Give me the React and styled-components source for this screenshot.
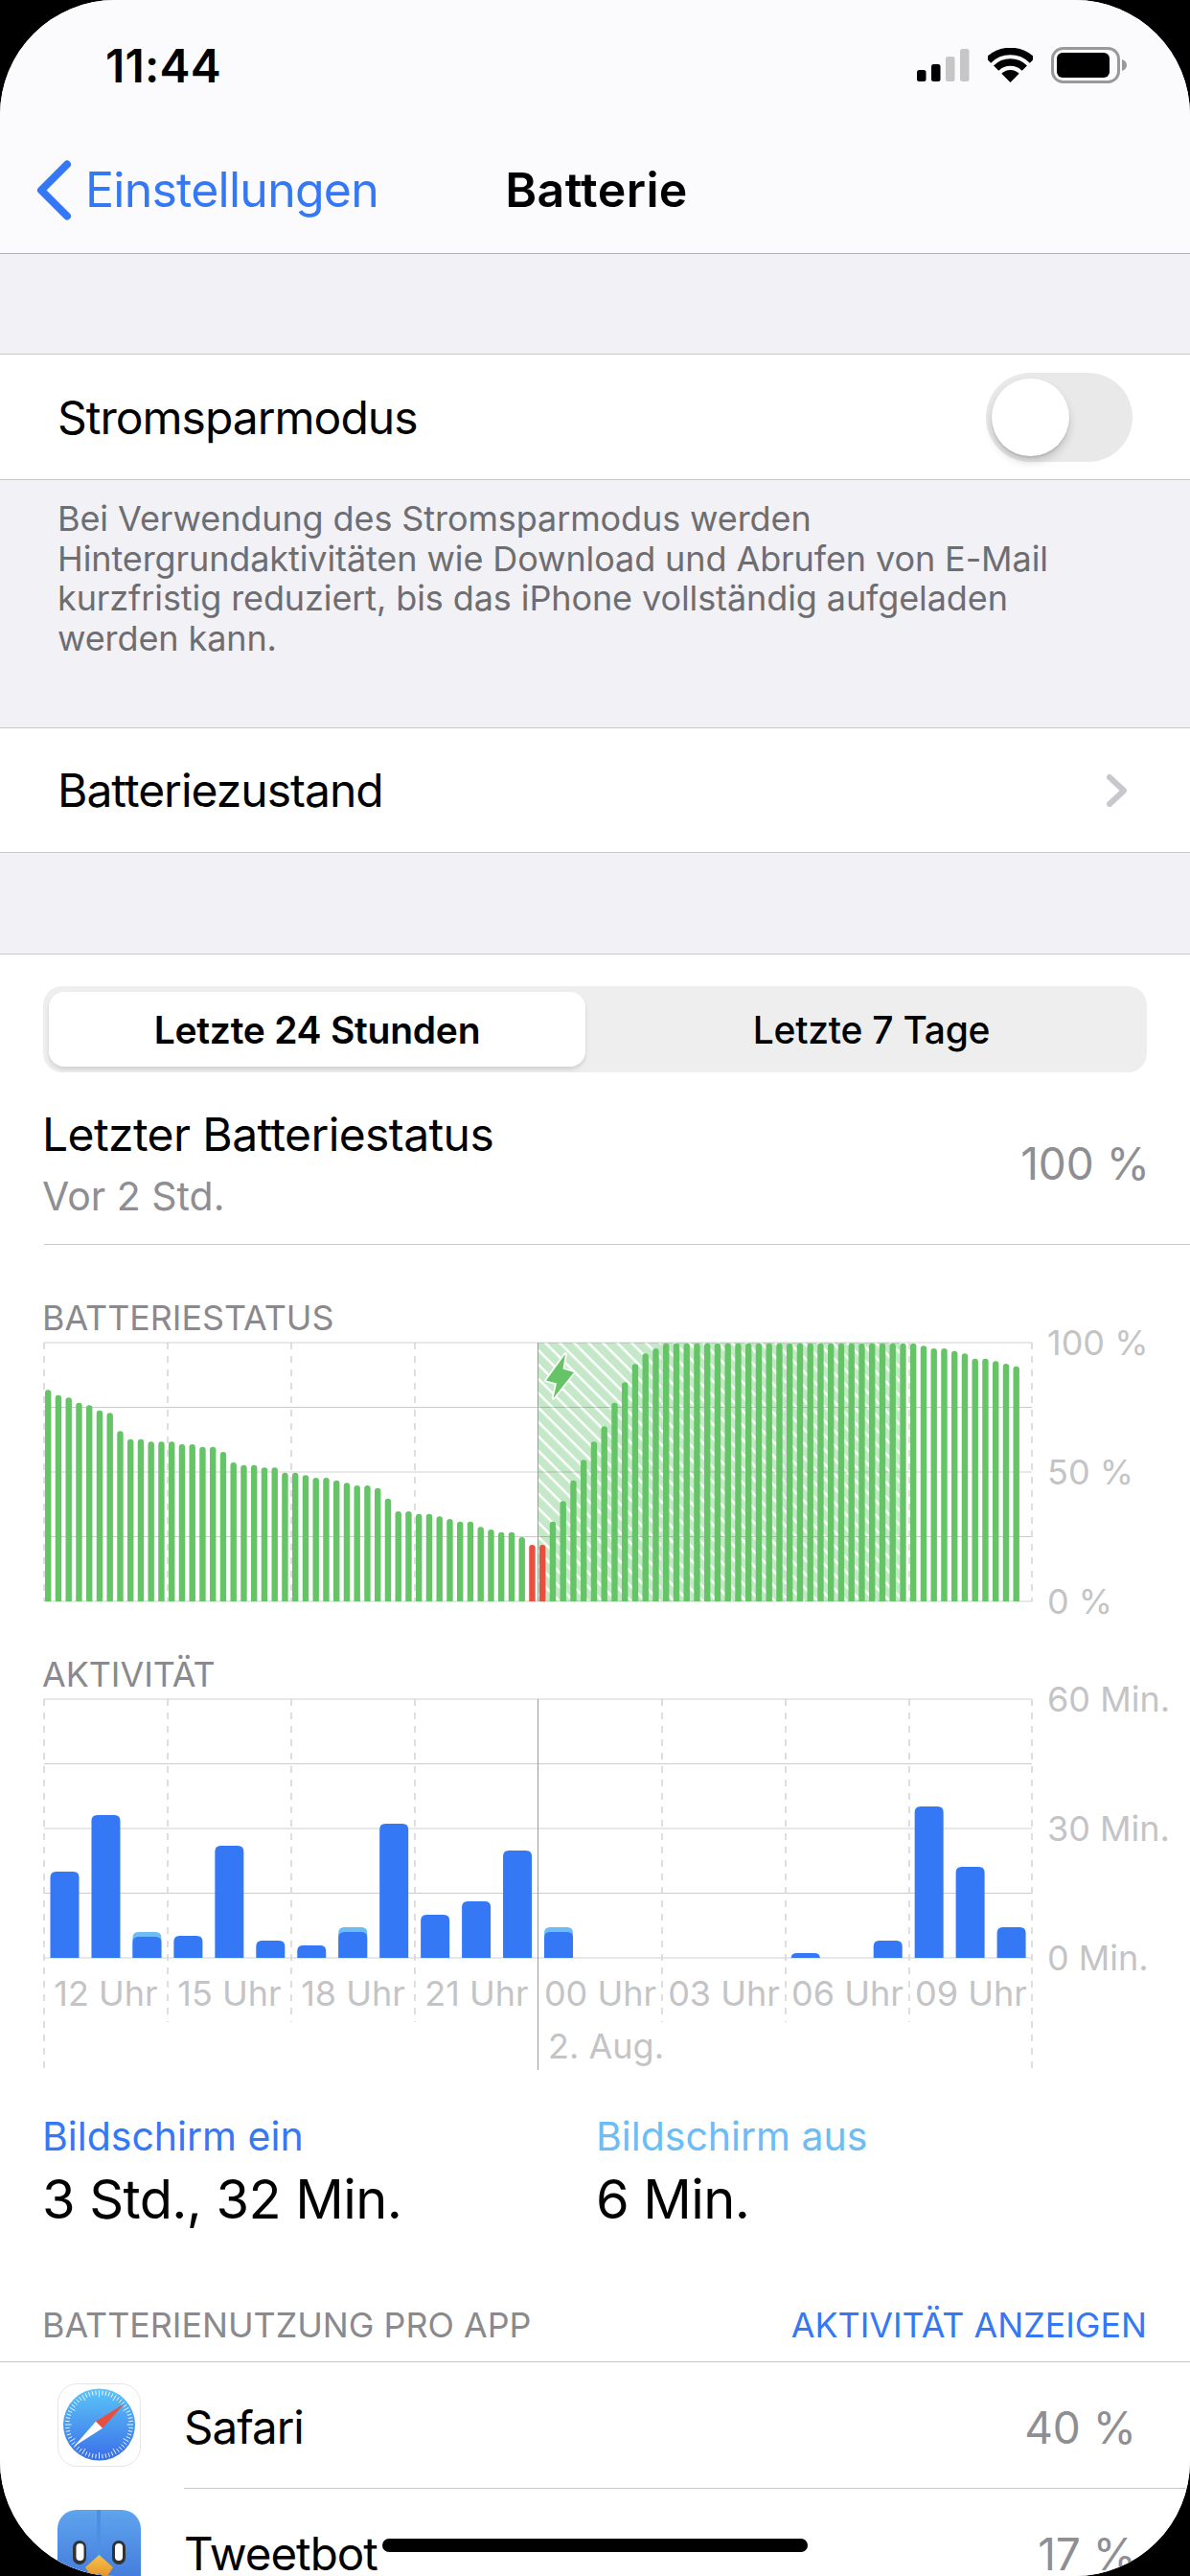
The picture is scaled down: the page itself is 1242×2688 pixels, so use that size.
import React from 'react'
import styled, { createGlobalStyle } from 'styled-components'

const GlobalStyle = createGlobalStyle`
  html, body {
    margin: 0;
    padding: 0;
    background: #000;
  }
  * {
    box-sizing: border-box;
  }
`

const Screen = styled.div`
  position: relative;
  width: 1242px;
  height: 2688px;
  overflow: hidden;
  border-radius: 120px;
  background: #f1f1f6;
  font-family: Inter, "Liberation Sans", sans-serif;
  color: #000;
`

const Header = styled.header`
  height: 265px;
  background: #fbfbfd;
  border-bottom: 1px solid #b2b2b2;
`

const StatusBar = styled.div`
  display: flex;
  align-items: center;
  justify-content: space-between;
  height: 136px;
  padding: 0 65px 0 110px;
`

const Clock = styled.span`
  font-size: 48px;
  font-weight: 600;
  letter-spacing: 0.2px;
`

const StatusIcons = styled.div`
  display: flex;
  align-items: center;
  gap: 19px;
`

const NavBar = styled.nav`
  display: grid;
  grid-template-columns: 1fr auto 1fr;
  align-items: center;
  height: 124px;
`

const BackLink = styled.a`
  display: flex;
  align-items: center;
  gap: 14px;
  padding-left: 38px;
  font-size: 50px;
  letter-spacing: -0.75px;
  color: #3478f6;
`

const NavTitle = styled.span`
  margin-left: 3px;
  font-size: 50px;
  font-weight: 600;
  letter-spacing: 0.4px;
`

const Gap = styled.div`
  height: ${p => p.$h}px;
`

const Row = styled.div`
  display: flex;
  align-items: center;
  justify-content: space-between;
  height: ${p => p.$h}px;
  padding: 0 60px 0 60px;
  background: #fff;
  border-top: 1px solid #c8c8cc;
  border-bottom: 1px solid #c8c8cc;
  font-size: 48px;
  letter-spacing: -1px;
`

const Toggle = styled.div`
  display: flex;
  align-items: center;
  width: 153px;
  height: 93px;
  padding-left: 6px;
  border-radius: 47px;
  background: #e9e9ea;
`

const Knob = styled.div`
  width: 81px;
  height: 81px;
  border-radius: 50%;
  background: #fff;
  box-shadow: 0 6px 10px rgba(0, 0, 0, 0.16), 0 2px 2px rgba(0, 0, 0, 0.1);
`

const Footnote = styled.p`
  height: 258px;
  margin: 0;
  padding: 20px 60px 0 60px;
  font-size: 36px;
  line-height: 41.7px;
  letter-spacing: -0.1px;
  color: #6d6d72;
`

const Content = styled.section`
  height: 1693px;
  background: #fff;
  border-top: 1px solid #c8c8cc;
`

const Segments = styled.div`
  display: flex;
  align-items: center;
  width: 1152px;
  height: 90px;
  margin: 33px 0 0 45px;
  padding: 0 6px;
  border-radius: 20px;
  background: #eeeeef;
`

const Segment = styled.div`
  display: flex;
  align-items: center;
  justify-content: center;
  flex: ${p => (p.$active ? '0 0 560px' : '1')};
  height: 78px;
  padding-left: ${p => (p.$active ? 0 : 17)}px;
  border-radius: 16px;
  font-size: 39px;
  font-weight: ${p => (p.$active ? 600 : 500)};
  letter-spacing: -0.25px;
  background: ${p => (p.$active ? '#fff' : 'transparent')};
  box-shadow: ${p => (p.$active ? '0 3px 4px rgba(0, 0, 0, 0.12)' : 'none')};
`

const LastCharge = styled.div`
  display: flex;
  justify-content: space-between;
  align-items: flex-start;
  height: 180px;
  margin-left: 46px;
  padding: 40px 42px 0 0;
  border-bottom: 1px solid #c8c8cc;
`

const LastTitle = styled.div`
  margin-left: -2px;
  font-size: 48px;
  line-height: 50px;
  letter-spacing: -0.6px;
`

const LastSub = styled.div`
  margin: 14px 0 0 -2px;
  font-size: 41px;
  line-height: 50px;
  color: #8e8e93;
`

const LastValue = styled.div`
  margin-top: 30px;
  font-size: 46px;
  line-height: 50px;
  color: #8e8e93;
`

const ChartLabel = styled.div`
  height: 40px;
  margin: 56px 0 6px 44px;
  font-size: 35.8px;
  line-height: 40px;
  color: #8a8a8e;
`

const PlotRow = styled.div`
  display: flex;
  height: 270px;
  margin-left: 46px;
`

const Plot = styled.svg`
  display: block;
  flex: none;
  overflow: visible;
`

const YAxis = styled.div`
  display: flex;
  flex-direction: column;
  justify-content: space-between;
  height: 270px;
  margin-left: 16px;
`

const YTick = styled.span`
  display: flex;
  align-items: center;
  height: 0;
  font-size: 36px;
  white-space: nowrap;
  color: #c4c4c6;
`

const HourGrid = styled.div`
  display: grid;
  grid-template-columns: repeat(8, 129px);
  row-gap: 15px;
  margin: 17px 0 0 46px;
  font-size: 36px;
  line-height: 40px;
  color: #c4c4c6;
`

const Hour = styled.span`
  text-align: center;
  white-space: nowrap;
`

const DateTick = styled.span`
  grid-column: 5 / span 2;
  padding-left: 10px;
`

const Legend = styled.div`
  display: grid;
  grid-template-columns: 578px 1fr;
  margin: 52px 0 0 44px;
`

const LegendName = styled.div`
  font-size: 41px;
  line-height: 44px;
  color: ${p => p.$color};
`

const LegendValue = styled.div`
  margin-top: 14px;
  font-size: 56px;
  line-height: 60px;
  letter-spacing: -0.6px;
`

const UsageHeader = styled.div`
  display: flex;
  justify-content: space-between;
  height: 59px;
  margin-top: 81px;
  padding: 0 45px 0 44px;
  border-bottom: 1px solid #c8c8cc;
  font-size: 35.8px;
  line-height: 40px;
  color: #8a8a8e;
`

const UsageLink = styled.span`
  color: #3478f6;
`

const AppRow = styled.div`
  display: flex;
  align-items: flex-start;
  padding-left: 60px;
`

const AppIcon = styled.svg`
  display: block;
  flex: none;
  margin-top: 22px;
`

const AppBody = styled.div`
  display: flex;
  align-items: center;
  justify-content: space-between;
  flex: 1;
  height: 132px;
  margin-left: 45px;
  padding: 4px 56px 0 0;
  border-bottom: 1px solid #c8c8cc;
  font-size: 47.5px;
  letter-spacing: -1px;
`

const AppShare = styled.span`
  font-size: 46px;
  letter-spacing: 0;
  color: #8e8e93;
`

const HomeBar = styled.div`
  position: absolute;
  left: 399px;
  bottom: 25px;
  width: 444px;
  height: 14px;
  border-radius: 7px;
  background: #000;
`

const ChevronSvg = styled.svg`
  display: block;
  margin-right: 6px;
`

const SignalIcon = () => (
  <svg width="55" height="34" viewBox="0 0 55 34">
    <rect x="0" y="22" width="9.5" height="12" rx="2.5" fill="#000" />
    <rect x="15" y="16" width="9.5" height="18" rx="2.5" fill="#000" />
    <rect x="30" y="8" width="9.5" height="26" rx="2.5" fill="#c6c6c6" />
    <rect x="45" y="0" width="9.5" height="34" rx="2.5" fill="#c6c6c6" />
  </svg>
)

const WifiIcon = () => (
  <svg width="47" height="36" viewBox="0 0 47 36">
    <path d="M.5 13A32.5 32.5 0 0 1 46.5 13" fill="none" stroke="#000" strokeWidth="7.5" />
    <path d="M8.65 21.15A21 21 0 0 1 38.35 21.15" fill="none" stroke="#000" strokeWidth="7.5" />
    <path d="M23.5 36L14.3 26.8A13 13 0 0 1 32.7 26.8Z" fill="#000" />
  </svg>
)

const BatteryIcon = () => (
  <svg width="80" height="38" viewBox="0 0 80 38">
    <rect x="1.5" y="1.5" width="69" height="35" rx="11" fill="none" stroke="#999" strokeWidth="3" />
    <rect x="6" y="6" width="55" height="26" rx="6" fill="#000" />
    <path d="M74 13c3 1 5 3 5 6s-2 5-5 6z" fill="#999" />
  </svg>
)

const BackChevron = () => (
  <svg width="37" height="63" viewBox="0 0 37 63">
    <path d="M32 4.5L5 31.5L32 58.5" fill="none" stroke="#3478f6" strokeWidth="8" strokeLinecap="round" strokeLinejoin="round" />
  </svg>
)

const RowChevron = () => (
  <ChevronSvg width="21" height="34" viewBox="0 0 21 34">
    <path d="M3 3L18 17L3 31" fill="none" stroke="#c7c7cc" strokeWidth="6" strokeLinecap="round" strokeLinejoin="round" />
  </ChevronSvg>
)

// tops measured from the screenshot, 3x zoomed, baseline at 998
const batteryTops = [
  336, 352, 360, 376, 384, 400, 408, 465, 490, 490, 498, 498, 498, 506, 506, 514, 514, 530, 563, 571,
  571, 579, 579, 595, 595, 603, 611, 611, 619, 627, 635, 635, 643, 676, 716, 716, 724, 724, 732, 740,
  748, 748, 765, 773, 781, 781, 797, 821, 821, 748, 684, 619, 555, 498, 450, 376, 312, 255, 222, 206,
  190, 190, 190, 190, 190, 190, 190, 190, 190, 190, 190, 190, 190, 190, 190, 190, 190, 190, 190, 190,
  190, 190, 190, 190, 190, 198, 206, 206, 214, 222, 238, 238, 246, 254, 262,
]

// [screen on, screen off] in px, per hour
const activity = [
  [90, 0], [149, 0], [22, 5], [23, 0], [117, 0], [18, 0], [13, 0], [27, 5], [140, 0], [45, 0], [59, 0], [112, 0],
  [27, 5], [0, 0], [0, 0], [0, 0], [0, 0], [0, 0], [5, 0], [0, 0], [18, 0], [158, 0], [95, 0], [32, 0],
]

const gridX = [0, 129, 258, 387, 645, 774, 903, 1031]

const GridLines = ({ dashEnd, longEnd }) => (
  <>
    {[0, 135, 270].map(y => (
      <line key={y} x1="0" x2="1031" y1={y} y2={y} stroke="rgba(0,0,0,0.09)" strokeWidth="2" />
    ))}
    {[67.5, 202.5].map(y => (
      <line key={y} x1="0" x2="1031" y1={y} y2={y} stroke="rgba(0,0,0,0.2)" strokeWidth="1" />
    ))}
    {gridX.map(x => (
      <line
        key={x}
        x1={x}
        x2={x}
        y1="0"
        y2={x === 0 || x === 1031 ? longEnd : dashEnd}
        stroke="#d4d4d4"
        strokeWidth="1.5"
        strokeDasharray="7 7"
      />
    ))}
    <line x1="515.5" x2="515.5" y1="0" y2={longEnd} stroke="#9a9a9a" strokeWidth="1" />
  </>
)

const BatteryChart = () => (
  <Plot width="1031" height="270" viewBox="0 0 1031 270">
    <defs>
      <pattern id="charging" width="10.6" height="10.6" patternUnits="userSpaceOnUse" patternTransform="rotate(45)">
        <rect width="10.6" height="10.6" fill="#c5e9c8" />
        <rect y="0" width="10.6" height="2.4" fill="#fff" />
      </pattern>
    </defs>
    <rect x="516" y="0" width="377" height="270" fill="url(#charging)" />
    <GridLines dashEnd={270} longEnd={270} />
    {batteryTops.map((top, i) => {
      const x = 1 + i * 10.75
      const y = (top - 188) / 3
      return (
        <path
          key={i}
          d={`M${x} 270V${y + 3.2}a3.2 3.2 0 0 1 6.4 0V270Z`}
          fill={i === 47 || i === 48 ? '#ea4f3d' : '#64c466'}
        />
      )
    })}
    <path
      d="M544 12L524 39.5L535 42.5L531.5 58L553 31L541.5 27.5Z"
      fill="#64c466"
      stroke="#fff"
      strokeWidth="3.5"
      strokeLinejoin="round"
      paintOrder="stroke"
    />
  </Plot>
)

const ActivityChart = () => (
  <Plot width="1031" height="270" viewBox="0 0 1031 270">
    <GridLines dashEnd={337} longEnd={387} />
    {activity.map(([on, off], i) => {
      const x = 6.5 + i * 42.96
      const bar = (h, color) =>
        h > 0 && <path d={`M${x} 270V${270 - h + Math.min(6, h)}q0-${Math.min(6, h)} 6-${Math.min(6, h)}h18q6 0 6 ${Math.min(6, h)}V270Z`} fill={color} />
      return (
        <g key={i}>
          {off > 0 && bar(on + off, '#6cbcf5')}
          {bar(on, '#3478f6')}
        </g>
      )
    })}
  </Plot>
)

const ticks = Array.from({ length: 60 }, (_, i) => (i * Math.PI) / 30)

const SafariIcon = () => (
  <AppIcon width="87" height="87" viewBox="0 0 87 87">
    <defs>
      <linearGradient id="safariBlue" x1="0" y1="0" x2="0" y2="1">
        <stop offset="0" stopColor="#5cc5f8" />
        <stop offset="1" stopColor="#3a6ee8" />
      </linearGradient>
    </defs>
    <rect x="0.5" y="0.5" width="86" height="86" rx="20" fill="#fff" stroke="#e6e6e6" />
    <circle cx="43.5" cy="43" r="37.5" fill="url(#safariBlue)" />
    {ticks.map((a, i) => (
      <line
        key={i}
        x1={43.5 + Math.sin(a) * 35.5}
        y1={43 - Math.cos(a) * 35.5}
        x2={43.5 + Math.sin(a) * (i % 5 === 0 ? 29 : 31)}
        y2={43 - Math.cos(a) * (i % 5 === 0 ? 29 : 31)}
        stroke="#fff"
        strokeOpacity="0.9"
        strokeWidth="1"
      />
    ))}
    <path d="M70 21L40 39.7L47 46.8Z" fill="#ea4f3d" />
    <path d="M17 66L40 39.7L47 46.8Z" fill="#fff" />
  </AppIcon>
)

const TweetbotIcon = () => (
  <AppIcon width="87" height="87" viewBox="0 0 87 87">
    <defs>
      <linearGradient id="tweetBlue" x1="0" y1="0" x2="0" y2="1">
        <stop offset="0" stopColor="#5ea4ee" />
        <stop offset="1" stopColor="#3f74d8" />
      </linearGradient>
      <linearGradient id="beak" x1="0" y1="0" x2="0" y2="1">
        <stop offset="0" stopColor="#f8c14a" />
        <stop offset="1" stopColor="#e2912a" />
      </linearGradient>
    </defs>
    <rect width="87" height="87" rx="20" fill="url(#tweetBlue)" />
    <rect x="41" y="0" width="4" height="64" fill="#4d8fe0" />
    <rect x="16" y="32" width="14" height="25" rx="7" fill="#333" />
    <rect x="57" y="32" width="14" height="25" rx="7" fill="#333" />
    <rect x="19.5" y="35" width="8" height="18" rx="4" fill="#fff" />
    <rect x="60" y="35" width="8" height="18" rx="4" fill="#fff" />
    <path d="M43.5 47L58 60L50 72L43.5 66L37 72L29 60Z" fill="url(#beak)" />
  </AppIcon>
)

const hours = ['12 Uhr', '15 Uhr', '18 Uhr', '21 Uhr', '00 Uhr', '03 Uhr', '06 Uhr', '09 Uhr']

const App = () => (
  <>
    <GlobalStyle />
    <Screen>
      <Header>
        <StatusBar>
          <Clock>11:44</Clock>
          <StatusIcons>
            <SignalIcon />
            <WifiIcon />
            <BatteryIcon />
          </StatusIcons>
        </StatusBar>
        <NavBar>
          <BackLink>
            <BackChevron />
            Einstellungen
          </BackLink>
          <NavTitle>Batterie</NavTitle>
          <span />
        </NavBar>
      </Header>
      <Gap $h={104} />
      <Row $h={132}>
        Stromsparmodus
        <Toggle>
          <Knob />
        </Toggle>
      </Row>
      <Footnote>
        Bei Verwendung des Stromsparmodus werden
        <br />
        Hintergrundaktivitäten wie Download und Abrufen von E-Mail
        <br />
        kurzfristig reduziert, bis das iPhone vollständig aufgeladen
        <br />
        werden kann.
      </Footnote>
      <Row $h={131}>
        Batteriezustand
        <RowChevron />
      </Row>
      <Gap $h={105} />
      <Content>
        <Segments>
          <Segment $active>Letzte 24 Stunden</Segment>
          <Segment>Letzte 7 Tage</Segment>
        </Segments>
        <LastCharge>
          <div>
            <LastTitle>Letzter Batteriestatus</LastTitle>
            <LastSub>Vor 2 Std.</LastSub>
          </div>
          <LastValue>100 %</LastValue>
        </LastCharge>
        <ChartLabel>BATTERIESTATUS</ChartLabel>
        <PlotRow>
          <BatteryChart />
          <YAxis>
            <YTick>100 %</YTick>
            <YTick>50 %</YTick>
            <YTick>0 %</YTick>
          </YAxis>
        </PlotRow>
        <ChartLabel>AKTIVITÄT</ChartLabel>
        <PlotRow>
          <ActivityChart />
          <YAxis>
            <YTick>60 Min.</YTick>
            <YTick>30 Min.</YTick>
            <YTick>0 Min.</YTick>
          </YAxis>
        </PlotRow>
        <HourGrid>
          {hours.map(h => (
            <Hour key={h}>{h}</Hour>
          ))}
          <DateTick>2. Aug.</DateTick>
        </HourGrid>
        <Legend>
          <div>
            <LegendName $color="#3478f6">Bildschirm ein</LegendName>
            <LegendValue>3 Std., 32 Min.</LegendValue>
          </div>
          <div>
            <LegendName $color="#6cbcf5">Bildschirm aus</LegendName>
            <LegendValue>6 Min.</LegendValue>
          </div>
        </Legend>
        <UsageHeader>
          BATTERIENUTZUNG PRO APP
          <UsageLink>AKTIVITÄT ANZEIGEN</UsageLink>
        </UsageHeader>
        <AppRow>
          <SafariIcon />
          <AppBody>
            Safari
            <AppShare>40 %</AppShare>
          </AppBody>
        </AppRow>
        <AppRow>
          <TweetbotIcon />
          <AppBody>
            Tweetbot
            <AppShare>17 %</AppShare>
          </AppBody>
        </AppRow>
      </Content>
      <HomeBar />
    </Screen>
  </>
)

export default App
